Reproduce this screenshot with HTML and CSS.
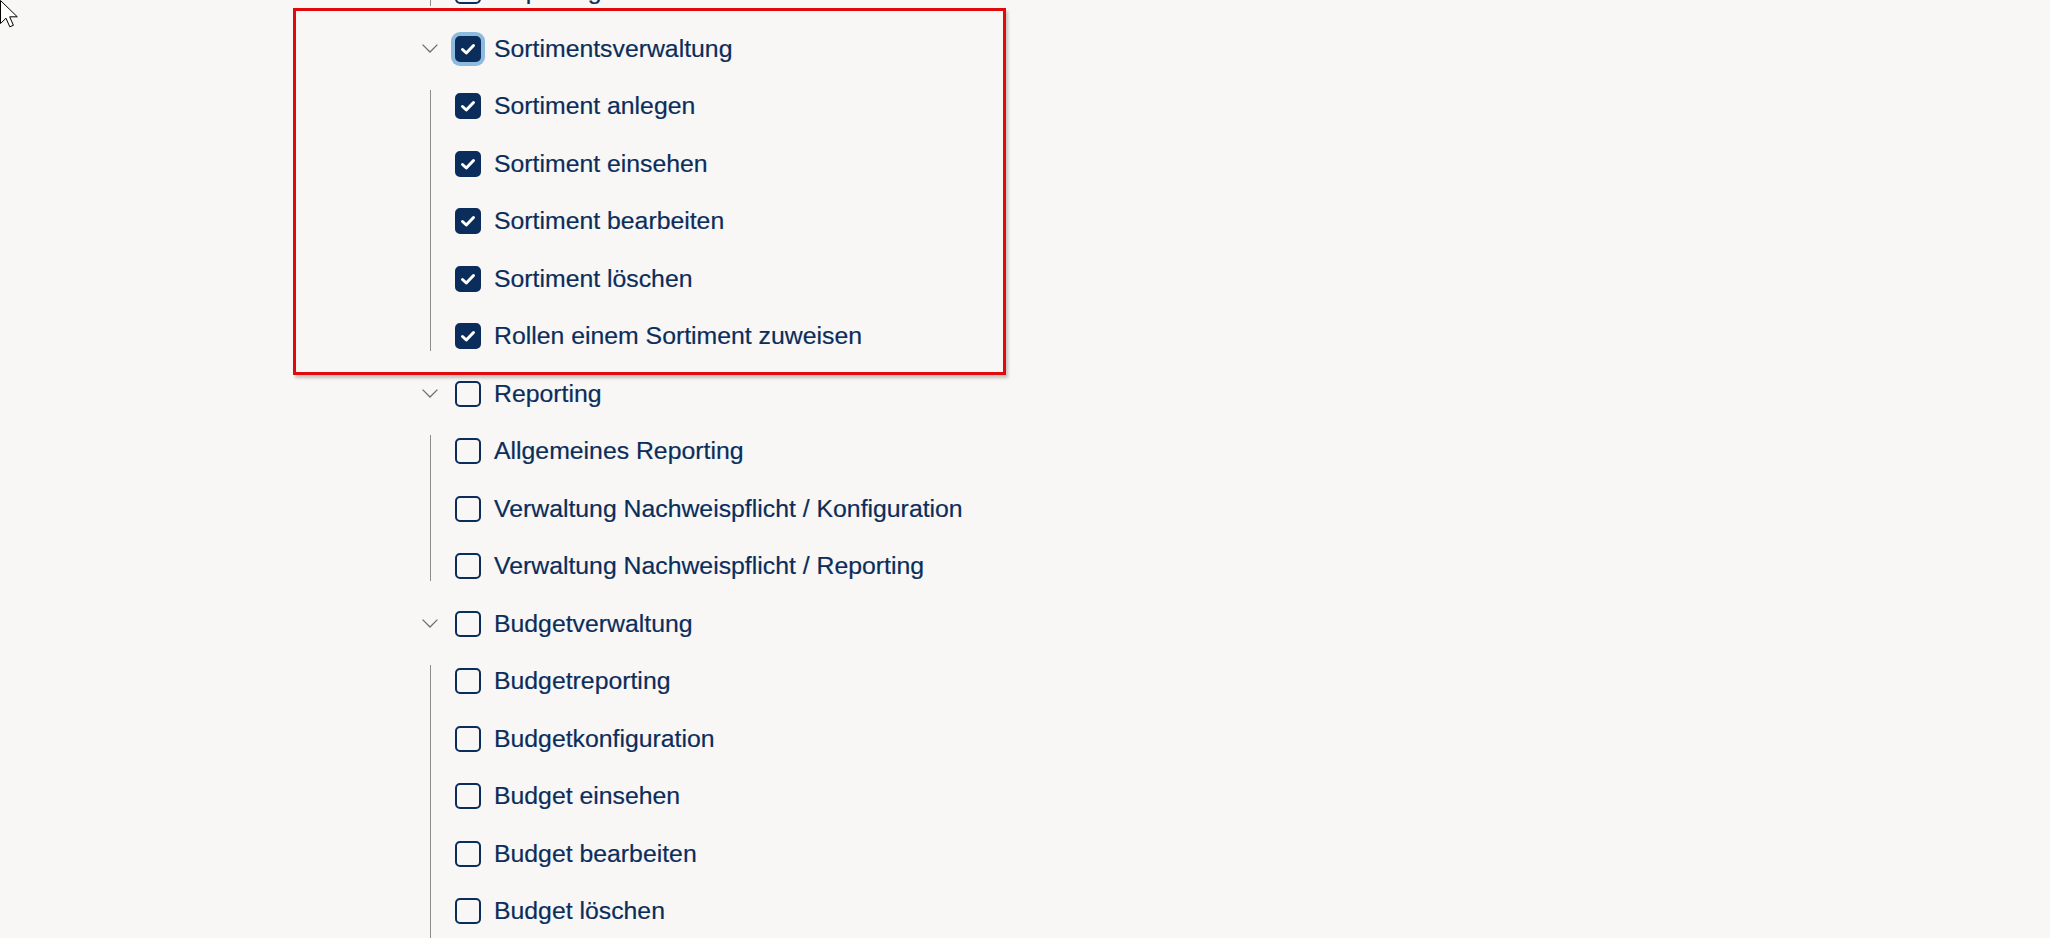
FILE: index.html
```html
<!DOCTYPE html>
<html>
<head>
    <title>Berechtigungen</title>
    <meta name="viewport" content="width=device-width, initial-scale=1.0">
    <link rel="stylesheet" href="styles.css">
</head>
<body>
    <div class="tree">
        <!-- tail of the previous group, scrolled out of view -->
        <div class="children">
            <div class="row"><span class="box"></span><span class="label">Reporting</span></div>
        </div>

        <div class="group">
            <div class="row head">
                <span class="chev"><svg width="16" height="9" viewBox="0 0 16 9"><polyline points="0.6,0.6 8,8 15.4,0.6"/></svg></span>
                <span class="box checked focus"><svg viewBox="0 0 26 26"><polyline points="7.5,13.5 11.3,17 18.5,9.5"/></svg></span>
                <span class="label">Sortimentsverwaltung</span>
            </div>
            <div class="children">
                <div class="row"><span class="box checked"><svg viewBox="0 0 26 26"><polyline points="7.5,13.5 11.3,17 18.5,9.5"/></svg></span><span class="label">Sortiment anlegen</span></div>
                <div class="row"><span class="box checked"><svg viewBox="0 0 26 26"><polyline points="7.5,13.5 11.3,17 18.5,9.5"/></svg></span><span class="label">Sortiment einsehen</span></div>
                <div class="row"><span class="box checked"><svg viewBox="0 0 26 26"><polyline points="7.5,13.5 11.3,17 18.5,9.5"/></svg></span><span class="label">Sortiment bearbeiten</span></div>
                <div class="row"><span class="box checked"><svg viewBox="0 0 26 26"><polyline points="7.5,13.5 11.3,17 18.5,9.5"/></svg></span><span class="label">Sortiment löschen</span></div>
                <div class="row"><span class="box checked"><svg viewBox="0 0 26 26"><polyline points="7.5,13.5 11.3,17 18.5,9.5"/></svg></span><span class="label">Rollen einem Sortiment zuweisen</span></div>
            </div>
        </div>

        <div class="group">
            <div class="row head">
                <span class="chev"><svg width="16" height="9" viewBox="0 0 16 9"><polyline points="0.6,0.6 8,8 15.4,0.6"/></svg></span>
                <span class="box"></span>
                <span class="label">Reporting</span>
            </div>
            <div class="children">
                <div class="row"><span class="box"></span><span class="label">Allgemeines Reporting</span></div>
                <div class="row"><span class="box"></span><span class="label">Verwaltung Nachweispflicht / Konfiguration</span></div>
                <div class="row"><span class="box"></span><span class="label">Verwaltung Nachweispflicht / Reporting</span></div>
            </div>
        </div>

        <div class="group">
            <div class="row head">
                <span class="chev"><svg width="16" height="9" viewBox="0 0 16 9"><polyline points="0.6,0.6 8,8 15.4,0.6"/></svg></span>
                <span class="box"></span>
                <span class="label">Budgetverwaltung</span>
            </div>
            <div class="children more">
                <div class="row"><span class="box"></span><span class="label">Budgetreporting</span></div>
                <div class="row"><span class="box"></span><span class="label">Budgetkonfiguration</span></div>
                <div class="row"><span class="box"></span><span class="label">Budget einsehen</span></div>
                <div class="row"><span class="box"></span><span class="label">Budget bearbeiten</span></div>
                <div class="row"><span class="box"></span><span class="label">Budget löschen</span></div>
            </div>
        </div>
    </div>

    <!-- screenshot annotation + mouse pointer -->
    <div class="highlight"></div>
    <svg class="cursor" width="20" height="28" viewBox="0 0 20 28">
        <path d="M0.5,0.5 L0.5,23.5 L6,18.2 L9.8,26.8 L13.4,25.3 L9.7,16.8 L17.3,16.8 Z"/>
    </svg>
</body>
</html>
```

FILE: styles.css
```css
html, body {
    height: 100%;
    overflow: hidden;
}
body {
    margin: 0;
    background: #f8f7f5;
    font-family: "Liberation Sans", Arial, sans-serif;
    color: #0b2d5b;
}
.tree {
    margin-top: -37.75px;
    padding-left: 422px;
}
.row {
    display: flex;
    align-items: center;
    height: 57.5px;
}
.chev {
    width: 16px;
    height: 9px;
    margin-right: 17px;
    display: flex;
}
.chev svg polyline {
    fill: none;
    stroke: #6e6e6e;
    stroke-width: 1.3;
}
.box {
    width: 26px;
    height: 26px;
    box-sizing: border-box;
    border: 2px solid #0b2d5b;
    border-radius: 5px;
    flex-shrink: 0;
    display: flex;
}
.box.checked {
    background: #0b2d5b;
    border-color: #0b2d5b;
}
.box svg {
    width: 26px;
    height: 26px;
    margin: -2px;
}
.box svg polyline {
    fill: none;
    stroke: #fff;
    stroke-width: 3;
    stroke-linecap: round;
    stroke-linejoin: round;
}
.box.focus {
    box-shadow: 0 0 0 4px #8dbbe0;
}
.label {
    margin-left: 13px;
    font-size: 24.8px;
    white-space: nowrap;
    -webkit-text-stroke: 0.2px #0b2d5b;
}
.children {
    position: relative;
    margin-left: 8px;
    padding-left: 25px;
}
.children::before {
    content: "";
    position: absolute;
    left: 0;
    top: 12.75px;
    bottom: 13.75px;
    border-left: 1px solid #8d8d8d;
}
.children.more::before {
    bottom: -40px;
}
.highlight {
    position: absolute;
    left: 293px;
    top: 8px;
    width: 713px;
    height: 367px;
    box-sizing: border-box;
    border: 3px solid #e00a0a;
    box-shadow: 2px 3px 3px rgba(0,0,0,0.22);
}
.cursor {
    position: absolute;
    left: 0;
    top: 0;
}
.cursor path {
    fill: #fff;
    stroke: #000;
    stroke-width: 1;
}
```
